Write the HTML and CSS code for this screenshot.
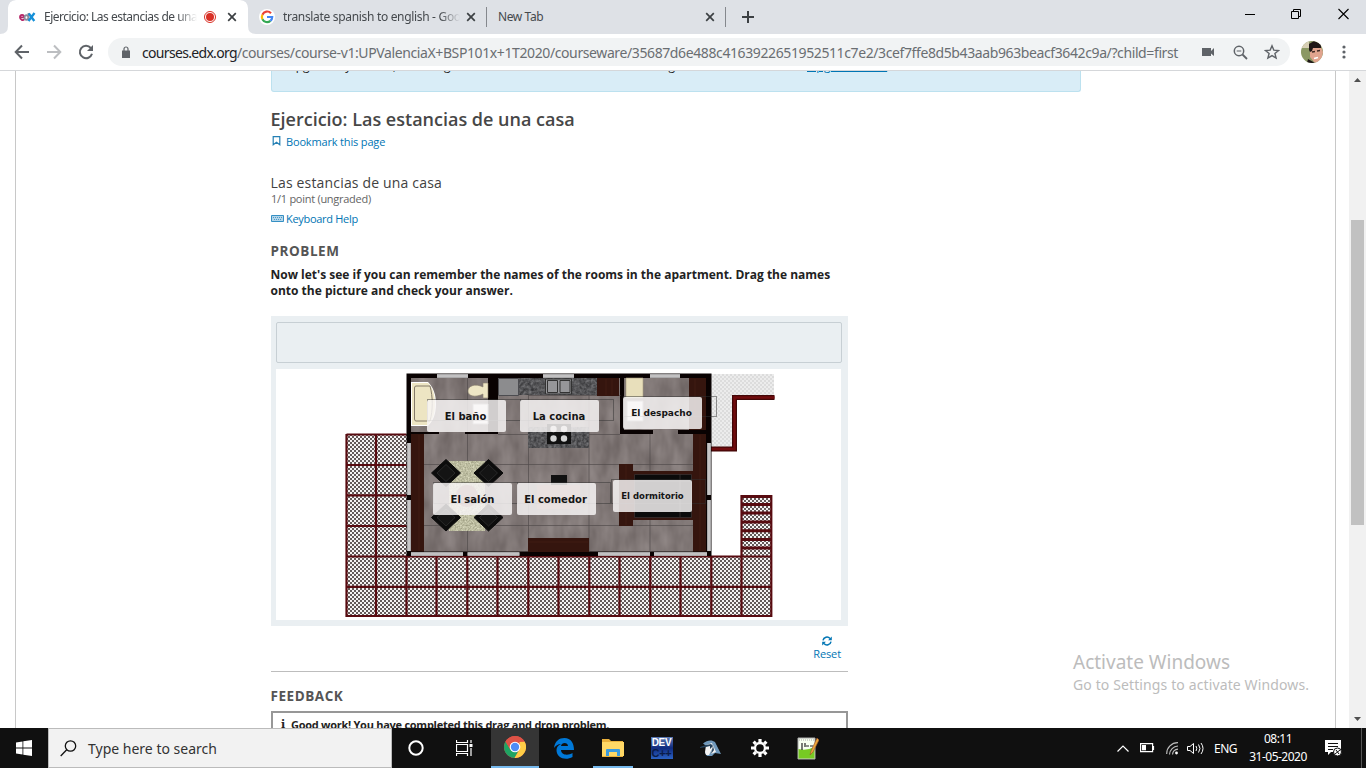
FILE: index.html
```html
<!DOCTYPE html>
<html lang="en">
<head>
<meta charset="utf-8">
<title>Ejercicio: Las estancias de una casa</title>
<link rel="stylesheet" href="styles.css">
</head>
<body>
<header class="tabs">
  <div class="tab active">
    <svg class="edx" width="17" height="12" viewBox="0 0 17 12"><g fill="none" stroke-width="1.8"><path stroke="#b62567" d="M1 6.3h4.2C5 3 1 3 1 6.3c0 3 3 3.300 4.300 2"/><path stroke="#8a8c9c" d="M9.500 2v7.500M9.300 6.500c0-3-3.800-3-3.800 0s3.800 3 3.800 0"/><path stroke="#1590d8" stroke-width="2.300" d="M9.800 2.500l5.500 7.500M15.500 2l-6 8"/></g></svg>
    <span class="tab-title fade t1">Ejercicio: Las estancias de una</span>
    <svg class="rec" width="14" height="14"><circle cx="7" cy="7" r="5.500" fill="none" stroke="#d93025"/><circle cx="7" cy="7" r="4" fill="#d93025"/></svg>
    <svg class="x" width="10" height="10"><path d="M1.200 1.200l7.600 7.600M8.800 1.200l-7.600 7.600"/></svg>
  </div>
  <div class="tab second">
    <svg class="google" width="16" height="16" viewBox="0 0 16 16"><circle cx="8" cy="8" r="8" fill="#fff"/><g fill="none" stroke-width="2.200"><path stroke="#ea4335" d="M12 4.200A5.200 5.200 0 0 0 3.400 5.700"/><path stroke="#fbbc05" d="M3.400 5.700a5.200 5.200 0 0 0 0 4.600"/><path stroke="#34a853" d="M3.400 10.300a5.200 5.200 0 0 0 8 1.600"/><path stroke="#4285f4" d="M11.400 11.900A5.200 5.200 0 0 0 13.200 8H8"/></g></svg>
    <span class="tab-title fade t2">translate spanish to english - Goo</span>
    <svg class="x" width="10" height="10"><path d="M1.200 1.200l7.600 7.600M8.800 1.200l-7.600 7.600"/></svg>
  </div>
  <div class="tab third">
    <span class="tab-title t3">New Tab</span>
    <svg class="x" width="10" height="10"><path d="M1.200 1.200l7.600 7.600M8.800 1.200l-7.600 7.600"/></svg>
  </div>
  <svg class="plus" width="12" height="12"><path d="M6 0v12M0 6h12" stroke="#3c4043" stroke-width="2"/></svg>
  <div class="window-controls">
    <svg width="10" height="12"><path d="M0 6.500h10" stroke="#000"/></svg>
    <svg width="11" height="12"><path d="M.5 3.500h7v7h-7zM2.500 3V1.500h7v7H8" fill="none" stroke="#000"/></svg>
    <svg width="11" height="12"><path d="M.5 1l10 10M10.500 1l-10 10" stroke="#000" stroke-width="1.100"/></svg>
  </div>
</header>
<div class="toolbar">
  <svg width="16" height="16" class="nav"><path d="M15 8H2M8 1.500L1.700 8 8 14.500" fill="none" stroke="#5f6368" stroke-width="2"/></svg>
  <svg width="16" height="16" class="nav"><path d="M1 8h13M8 1.500L14.300 8 8 14.500" fill="none" stroke="#bcbec1" stroke-width="2"/></svg>
  <svg width="16" height="16" class="nav"><path d="M12.800 4A6.200 6.200 0 1 0 14 9.800" fill="none" stroke="#5f6368" stroke-width="2"/><path d="M15 1v6H9z" fill="#5f6368"/></svg>
  <div class="omnibox">
    <svg width="8" height="12"><path d="M0 4.500h8V12H0z" fill="#5f6368"/><path d="M2 5V3a2 2 0 0 1 4 0v2" fill="none" stroke="#5f6368" stroke-width="1.200"/></svg>
    <span class="url"><b>courses.edx.org</b>/courses/course-v1:UPValenciaX+BSP101x+1T2020/courseware/35687d6e488c4163922651952511c7e2/3cef7ffe8d5b43aab963beacf3642c9a/?child=first</span>
    <svg class="cam" width="12" height="8"><path d="M0 0h9v3l3-3v8L9 5.500V8H0z" fill="#5f6368"/></svg>
    <svg class="lens" width="15" height="15" fill="none" stroke="#5f6368"><circle cx="6" cy="6" r="4.700" stroke-width="1.500"/><path d="M9.500 9.500l4.500 4.500" stroke-width="1.800"/><path d="M3.700 6h4.600"/></svg>
    <svg class="star" width="16" height="16"><path d="M8 1.800l1.800 4.300 4.700.4-3.600 3 1.200 4.600L8 11.600l-4.100 2.500 1.200-4.600-3.600-3 4.700-.4z" fill="none" stroke="#5f6368" stroke-width="1.400"/></svg>
  </div>
  <svg class="avatar" width="22" height="22"><defs><clipPath id="face"><circle cx="11" cy="11" r="11"/></clipPath></defs><g clip-path="url(#face)"><path fill="#8b9864" d="M0 0h22v22H0z"/><path fill="#d7cfb5" d="M0 0h8v7H0zM19 0h3v6h-3z"/><path fill="#e0a48e" d="M9 6l11 0 2 5-2 10-6 1-5-6z"/><path fill="#1e1717" d="M8 9V3l5-3 7 3v4l-8 0-1 3-2 1zM7 18l7 4H6z"/><path d="M11 11l3-.5M16 10l3-.5" stroke="#402923" stroke-width="1.300"/><path d="M13 17.500l4-1" stroke="#fff" stroke-width="1.300"/></g></svg>
  <svg class="dots" width="4" height="14" fill="#5f6368"><circle cx="2" cy="2" r="1.600"/><circle cx="2" cy="7" r="1.600"/><circle cx="2" cy="12" r="1.600"/></svg>
</div>
<div class="viewport">
  <div class="page">
    <main class="content">
      <div class="alert"><p><span class="alert-copy">Upgrade by Nov 26, 2020 to get unlimited access to the course as long as it exists.</span><a>Upgrade now</a></p></div>
      <h1>Ejercicio: Las estancias de una casa</h1>
      <a class="bookmark"><svg width="9" height="10"><path d="M1.200.700h6.600v8L4.500 6.200 1.200 8.700z" fill="none" stroke="#2580b4" stroke-width="1.200"/></svg><span>Bookmark this page</span></a>
      <section class="problem">
        <h2>Las estancias de una casa</h2>
        <p class="points">1/1 point (ungraded)</p>
        <a class="keyboard"><svg width="13" height="7"><path d="M.5.500h12v6H.5z" fill="#b5d5e9" stroke="#3590c4"/><path d="M2 2.500h9M3 4.500h7" stroke="#4a9bc9" stroke-dasharray="1 1"/></svg><span>Keyboard Help</span></a>
        <h3>PROBLEM</h3>
        <p class="prompt"><span>Now let's see if you can remember the names of the rooms in the apartment. Drag the names</span><br><span>onto the picture and check your answer.</span></p>
        <div class="dnd">
          <div class="bank"></div>
          <div class="plan">
            <svg width="565" height="251" viewBox="276 369 565 251">
              <defs>
                <pattern id="mesh" width="4" height="4" patternUnits="userSpaceOnUse"><path fill="#f5f3f3" d="M0 0h4v4H0z"/><path fill="#635a59" d="M0 0h2v2H0zM2 2h2v2H2z"/></pattern>
                <pattern id="pale" width="4" height="4" patternUnits="userSpaceOnUse"><path fill="#ececec" d="M0 0h4v4H0z"/><path fill="#dcdcdc" d="M0 0h2v2H0zM2 2h2v2H2z"/></pattern>
                <filter id="stone" x="0" y="0" width="1" height="1" color-interpolation-filters="sRGB"><feTurbulence type="fractalNoise" baseFrequency=".07 .03" numOctaves="3" seed="4"/><feColorMatrix values=".2 0 0 0 .4 .2 0 0 0 .365 .2 0 0 0 .36 0 0 0 0 1"/><feComposite in2="SourceGraphic" operator="in"/></filter>
                <filter id="granite" x="0" y="0" width="1" height="1" color-interpolation-filters="sRGB"><feTurbulence type="fractalNoise" baseFrequency=".35" numOctaves="2"/><feColorMatrix values=".4 0 0 0 .13 .4 0 0 0 .13 .4 0 0 0 .14 0 0 0 0 1"/><feComposite in2="SourceGraphic" operator="in"/></filter>
                <filter id="rug" x="0" y="0" width="1" height="1" color-interpolation-filters="sRGB"><feTurbulence type="fractalNoise" baseFrequency=".6" numOctaves="2"/><feColorMatrix values=".4 0 0 0 .54 .4 0 0 0 .54 .4 0 0 0 .43 0 0 0 0 1"/></filter>
                <g id="chair"><path d="M0-13.500L14.500 0 0 13.500-14.500 0z" fill="#0c0c0c" stroke="#0c0c0c" stroke-linejoin="round"/><path d="M-9 0L0-8.500 9 0 0 8.500z" fill="#141414" stroke="#343434" stroke-width=".7"/></g>
              </defs>
              <path fill="url(#mesh)" d="M346 434h61v122h365v61H346zM741 495h31v61h-31z"/>
              <path fill="none" stroke="#580b10" stroke-width="2.200" d="M346.500 434.500h60M346.500 465h60M346.500 495.300h60M346.500 526h60M346.500 556.500h425M346.500 586.800h425M346.500 616h425M346.500 434v183M376 434v183M406.500 556v61M436.500 556v61M467.300 556v61M497.500 556v61M528.300 556v61M558.500 556v61M589.300 556v61M619.500 556v61M650.300 556v61M680.500 556v61M711.300 556v61M741.500 495v122M771.300 495v122"/>
              <path stroke="#580b10" stroke-width="3" d="M741 496.500h31M741 504.500h31M741 513h31M741 522h31M741 530.700h31M741 539.500h31M741 548h31"/>
              <path fill="url(#pale)" d="M711 374h63v22h-41v52h-22z"/>
              <path d="M774.500 397.500h-40v51.500H711" fill="none" stroke="#420707" stroke-width="5"/><path d="M774.500 397.500h-40v51.500H711" fill="none" stroke="#700b0d" stroke-width="2.500"/>
              <path fill="#090202" d="M406.500 373.500h305V556h-305z"/>
              <path filter="url(#stone)" d="M411 378h77v54h-77zM498 378h122v56h-122zM624 378h82v52h-82zM424 434h269v117.500H424zM439 430h26v5h-26zM653 429h25v6h-25z"/>
              <path fill="none" stroke="#514c4c" stroke-width=".7" d="M467.500 378v54M467.500 434v117M528.500 395v143M589 395v157M650 434v118M424 464.500h269M498 434.500h122M424 525.500h269M528.500 395.500h92"/>
              <path fill="#35150e" d="M411 434h13v117.500h-13zM693 434h13v117.500h-13zM597 378h22v18h-22zM689 378h17v52h-17zM619 464h14v62h-14zM528 538h61v14h-61z"/>
              <path fill="none" stroke="#4f2519" stroke-width=".5" d="M419 435v116M700 435v116M606 379v16M612 379v16M695 379v50M626 465v60M529 542h59"/>
              <path fill="#aaa9aa" d="M437 374h31v4h-31zM543 374h31v4h-31zM650 374h30v4h-30zM407 443h4v52h-4zM407 500h4v51h-4zM707 443h4v52h-4zM707 500h4v51h-4zM411 552h52v4h-52zM467.500 552h52v4h-52zM598 552h52v4h-52zM654 552h53v4h-53z"/>
              <path stroke="#dadada" stroke-width="1.200" d="M437 376h31M543 376h31M650 376h30M409 443v52M409 500v51M709 443v52M709 500v51M411 554h52M467.500 554h52M598 554h52M654 554h53"/>
              <path fill="#fff" d="M411 382h17c5 5 8 12 8 22s-3 17-8 22h-17z"/><path fill="#ede5c3" d="M412 383h16c5 5 7 12 7 21s-2 16-7 21h-16z"/><path fill="#ede5c3" stroke="#847a68" d="M416 386h14c3 11 3 24 0 35h-14q-1.500 0-1.500-2v-31q0-2 1.500-2z"/>
              <path fill="#eee6c5" stroke="#8b826e" stroke-width=".6" d="M488 383h-5v4c-8-4-15-1-15 4s7 7 15 3v4h5z"/>
              <path filter="url(#granite)" d="M519 378h78v17h-78zM528 427h61v21h-61z"/>
              <path fill="#8c8c8e" stroke="#4c4c50" d="M498.500 378.500h20v17h-20z"/><path fill="#969699" stroke="#333" d="M545.500 379h26v15h-26zM547.500 380.500h10v12h-10zM560 380.500h10v12h-10z"/>
              <path fill="#111" d="M547 424h24v20h-24zM551 475h16v10h-16z"/><g fill="#d4d4d4"><circle cx="553.500" cy="429" r="3.200"/><circle cx="564" cy="429" r="3.200"/><circle cx="553.500" cy="438.500" r="3.200"/><circle cx="564" cy="438.500" r="3.200"/></g>
              <path fill="#e8dfbb" stroke="#a79e7f" stroke-width=".6" d="M626 378h17v20h-17z"/><path fill="#fff" stroke="#aaa" d="M627 401h16v20h-16zM473 404h15v20h-15z"/><path fill="#35150e" d="M632 471h61v49h-61z"/><path fill="#0b0b0b" stroke="#3c3434" stroke-width=".7" d="M634.500 474.500h57v43h-57zM634.500 481h57M680 474v43"/>
              <path filter="url(#rug)" d="M449 461h36v70h-36z"/><circle cx="467" cy="496" r="11" fill="#9c7770"/><path fill="#9c7770" d="M537 485h43v24h-43z"/>
              <use href="#chair" x="446" y="473"/><use href="#chair" x="488.500" y="473"/><use href="#chair" x="446" y="517.500"/><use href="#chair" x="488.500" y="517.500"/>
              <path fill="none" stroke="#333" stroke-dasharray="1 1" d="M427.500 420.500v-21h93v21zM520.500 399.500h93v21h-93zM623.500 396.500h93v20h-93zM433.500 482.500h84v21h-84zM517.500 482.500h93v21h-93zM611.500 479.500h94v24h-94z"/>
            </svg>
            <div class="label bano">El baño</div><div class="label cocina">La cocina</div><div class="label despacho">El despacho</div>
            <div class="label salon">El salón</div><div class="label comedor">El comedor</div><div class="label dormitorio">El dormitorio</div>
          </div>
        </div>
        <div class="actions"><a class="reset"><svg width="10" height="10" fill="none" stroke="#0075b4" stroke-width="1.500"><path d="M1 4.300A4 4 0 0 1 8 2.500M9 5.700A4 4 0 0 1 2 7.500"/><path d="M9.800.5v3.700H6.100zM.2 9.500V5.800h3.700z" fill="#0075b4" stroke="none"/></svg><span>Reset</span></a></div>
        <h3 class="fb-title">FEEDBACK</h3>
        <div class="feedback"><span class="info">i</span><span class="good">Good work! You have completed this drag and drop problem.</span></div>
      </section>
    </main>
    <aside class="watermark"><p class="w1">Activate Windows</p><p class="w2">Go to Settings to activate Windows.</p></aside>
  </div>
  <div class="scrollbar"><svg width="7" height="4"><path d="M3.500 0L7 4H0z" fill="#505050"/></svg><div class="thumb"></div><svg width="7" height="4"><path d="M0 0h7L3.500 4z" fill="#505050"/></svg></div>
</div>
<footer class="taskbar">
  <div class="start"><svg width="16" height="16" fill="#fff"><path d="M0 2.500l6.500-1v6H0zM7.300 1.300L16 0v7.500H7.300zM0 8.400h6.500v6L0 13.500zM7.300 8.400H16V16l-8.700-1.300z"/></svg></div>
  <div class="search"><svg width="17" height="17" fill="none" stroke="#111" stroke-width="1.300"><circle cx="10.500" cy="6" r="5.200"/><path d="M6.700 9.700L.7 16"/></svg><span>Type here to search</span></div>
  <div class="app cortana"><svg width="16" height="16"><circle cx="8" cy="8" r="6.700" fill="none" stroke="#fff" stroke-width="2"/></svg></div>
  <div class="app"><svg width="17" height="16" fill="none" stroke="#fff"><path d="M.5 0v2.500h11V0M.5 16v-2.500h11V16M.5 4.500h11v7H.5zM15 0v3M15 8v8" stroke-width="1.200"/><path d="M13.500 4h3v3h-3z" fill="#fff" stroke="none"/></svg></div>
  <div class="app chrome"><svg width="22" height="22" viewBox="0 0 22 22"><circle cx="11" cy="11" r="11" fill="#de5246"/><path d="M1.500 5.500A11 11 0 0 0 10.500 22l4.700-8.500L11 11 6 13z" fill="#1fa463"/><path d="M20.500 5.500A11 11 0 0 1 10.500 22l5-8.500V6z" fill="#ffcd46"/><path d="M11 5.500h9.500A11 11 0 0 0 1.500 5.500L6 13z" fill="#de5246"/><circle cx="11" cy="11" r="5.300" fill="#fff"/><circle cx="11" cy="11" r="4.200" fill="#4c8bf5"/></svg></div>
  <div class="app"><svg width="20" height="21" viewBox="0 0 20 21"><path d="M0 10C1 3 5 0 10.500 0 17 0 20 5 20 12H7c0 5 7 6 11.500 3v4c-7 4-16 1-16-7 0-3 2-5 4.500-6C4 6 1.500 8 0 10zm7-2h7c0-4-6.500-4-7 0z" fill="#0078d7"/></svg></div>
  <div class="app explorer"><svg width="22" height="19"><path d="M0 1h7l2 2h12v16H0z" fill="#eab13c"/><path d="M0 4h22v14H0z" fill="#ffd866"/><path d="M4 18v-6q0-1 1-1h12q1 0 1 1v6h-3v-4H7v4z" fill="#3b9bdf"/></svg></div>
  <div class="app"><div class="dev"><span>DEV</span><span class="cpp">C++</span></div></div>
  <div class="app"><svg width="21" height="17" viewBox="0 0 21 17"><path d="M3 3.500C7 0 12-.5 15 2l6 12-6-1-3 3H7l-2-3 3-6-3-2z" fill="#6f98bb"/><path d="M6 5l6-2 1 4-4 8-3 0-1-3zM13 5l3 7-5 2z" fill="#f3f3f3"/><path d="M0 7l6-2 5-1 2 2-3 3 0-3-4 1-6 1zM13 6l1 4-3 4z" fill="#24415b"/></svg></div>
  <div class="app"><svg width="18" height="18" viewBox="0 0 18 18"><g stroke="#fff" fill="none"><circle cx="9" cy="9" r="5" stroke-width="2.300"/><path stroke-width="3.200" d="M9 0v3M9 15v3M0 9h3M15 9h3M2.600 2.600l2.200 2.200M13.200 13.200l2.200 2.200M2.600 15.400l2.200-2.200M13.200 4.800l2.200-2.200"/></g></svg></div>
  <div class="app notepad"><svg width="22" height="24" viewBox="0 0 22 24"><path d="M1 2h17v21H1z" fill="#f7fff0" stroke="#aaa"/><path d="M1.500 13q8 2 16-2v11.500h-16z" fill="#77ca23"/><path d="M2 4h15" stroke="#aaa" stroke-dasharray="1 1"/><path d="M5 7v7M8 7v4M9 10h3M13 10h3" stroke="#222" stroke-width="1.200"/><path d="M20 2l-6 13-1 4 3-3 6-12z" fill="#eda63a" stroke="#94512e" stroke-width=".6"/></svg></div>
  <div class="tray">
    <svg width="12" height="7" fill="none" stroke="#fff" stroke-width="1.200"><path d="M.5 6.500L6 1l5.500 5.500"/></svg>
    <svg width="15" height="10"><path d="M.6.600h12v8H.6zM13.500 3v4" fill="none" stroke="#fff" stroke-width="1.200"/><path d="M2 2h4v5.300H2z" fill="#fff"/></svg>
    <svg width="13" height="13" fill="none" stroke="#bbb" stroke-width="1.200"><path d="M.7 12A11 11 0 0 1 12 .7M3.500 12.500A9 9 0 0 1 12 4M6.500 12.500A6 6 0 0 1 12 7.200"/><circle cx="10.500" cy="11" r="1.400" fill="#fff" stroke="none"/></svg>
    <svg class="sound" width="17" height="13" fill="none" stroke="#fff"><path d="M.5 4.500H3l3.500-3v10L3 8.500H.5zM9 4q1.500 2.500 0 5M11.500 2.500q3 4 0 8M14 1q4 5.500 0 11"/></svg>
    <span class="lang">ENG</span>
    <div class="clock"><span>08:11</span><span class="date">31-05-2020</span></div>
    <svg class="notes" width="17" height="17"><path d="M0 0h16v12H6l-3 3v-3H0z" fill="#fff"/><path d="M3 3.500h10M3 6.500h10M3 9.500h5" stroke="#111"/><circle cx="12.500" cy="12" r="4" fill="#fff" stroke="#111"/><path d="M10 14l5-4M11 10l3 4" stroke="#111"/></svg>
  </div>
  <div class="desktop-edge"></div>
</footer>
</body>
</html>
```
FILE: styles.css
```css
* { box-sizing: border-box; }
body { margin: 0; width: 1366px; height: 768px; overflow: hidden; display: flex; flex-direction: column; background: #fff; font-family: "Open Sans", sans-serif; color: #222; }
svg { display: block; flex: none; }
p, h1, h2, h3 { margin: 0; white-space: nowrap; }

.tabs { height: 34px; flex: none; display: flex; align-items: center; background: #dee1e6; }
.tab { height: 34px; display: flex; align-items: center; font: 12px "Noto Sans", sans-serif; color: #45494d; }
.active { width: 240px; margin-left: 8px; padding-left: 11px; background: #fff; border-radius: 8px 8px 0 0; box-shadow: 8px 8px 0 #fff, -8px 8px 0 #fff; clip-path: path("M-8 34Q0 34 0 26V8Q0 0 8 0H232Q240 0 240 8V26Q240 34 248 34Z"); }
.second { width: 239px; padding-left: 11px; border-right: 1px solid #85888d; height: 20px; }
.third { width: 239px; padding-left: 11px; border-right: 1px solid #85888d; height: 20px; }
.tab-title { overflow: hidden; white-space: nowrap; line-height: 20px; }
.t1 { width: 153px; margin-left: 8px; letter-spacing: -.5px; }
.t2 { width: 177px; margin-left: 8px; letter-spacing: -.32px; }
.t3 { width: 207px; letter-spacing: -.4px; }
.fade { -webkit-mask-image: linear-gradient(90deg, #000 calc(100% - 20px), transparent); mask-image: linear-gradient(90deg, #000 calc(100% - 20px), transparent); }
.rec { margin-left: 6px; }
.x { stroke: #3c4043; stroke-width: 1.7; }
.rec + .x { margin-left: 10px; }
.second .x { margin-left: 6px; }
.plus { margin-left: 16px; }
.window-controls { display: flex; gap: 36px; margin: 0 17px 6px auto; }

.toolbar { height: 37px; flex: none; display: flex; align-items: center; padding: 0 19px 0 14px; border-bottom: 1px solid #d5d7da; }
.nav + .nav { margin-left: 16px; }
.omnibox { flex: none; width: 1182px; height: 28px; margin-left: 14px; padding-left: 14px; background: #f1f3f4; border-radius: 14px; display: flex; align-items: center; }
.url { width: 1037px; margin-left: 12px; font: 14px "Noto Sans", sans-serif; letter-spacing: -.393px; color: #6a6e72; white-space: nowrap; }
.url b { font-weight: 400; letter-spacing: -.68px; color: #202124; }
.cam { margin-left: 23px; }
.lens { margin-left: 19px; }
.star { margin-left: 16px; }
.avatar { margin-left: 11px; }
.dots { margin-left: 19px; }

.viewport { height: 657px; flex: none; display: flex; overflow: hidden; }
.page { width: 1321px; margin-left: 15px; border: solid #c8c8c8; border-width: 0 1px; display: flex; }
.content { width: 810px; margin-left: 255px; flex: none; }
.alert { height: 21px; background: #d9edf7; border: solid #bce1ef; border-width: 0 1px 1px; border-radius: 0 0 3px 3px; overflow: hidden; }
.alert p { margin: -14px 0 0 15px; font-size: 12px; line-height: 18px; display: flex; }
.alert-copy { width: 520px; letter-spacing: -.05px; }
.alert a { color: #0075b4; text-decoration: underline; letter-spacing: .45px; }
h1 { margin: 15px 0 0 -.5px; font-size: 18px; line-height: 24px; font-weight: 600; color: #474747; }
.bookmark { display: flex; align-items: center; height: 16px; margin-top: 2px; padding-left: 1px; gap: 5px; color: #0075b4; font-size: 11px; font-weight: 500; letter-spacing: -.16px; }
.problem { width: 577px; padding-top: 24px; }
h2 { margin-left: -.5px; font-size: 14px; line-height: 20px; font-weight: 400; letter-spacing: .17px; color: #414141; }
.points { margin-top: -1px; font-size: 11px; line-height: 13px; letter-spacing: -.27px; color: #646464; }
.keyboard { display: flex; align-items: center; gap: 2px; height: 16px; margin-top: 5px; color: #0075b4; font-size: 11px; letter-spacing: -.3px; }
h3 { margin: 15px 0 0 -.5px; font-size: 13.5px; line-height: 20px; font-weight: 700; letter-spacing: .55px; color: #555; }
.prompt { margin: 6px 0 0 -.5px; font-size: 12px; line-height: 16px; font-weight: 700; color: #222; }
.dnd { margin-top: 17px; height: 310px; padding: 6px 5px 0; background: #eaeff2; }
.bank { width: 566px; height: 41px; border: 1px solid #c7cfd4; border-radius: 2px; }
.plan { width: 565px; height: 251px; margin-top: 6px; background: #fff; position: relative; }
.label { position: absolute; width: 79px; height: 32px; border-radius: 2px; background: rgba(248, 246, 246, .84); color: #151515; display: grid; place-items: center; font: bold 10px "DejaVu Sans", sans-serif; white-space: nowrap; }
.bano { left: 151px; top: 31px; padding-right: 2px; }
.cocina { left: 244px; top: 31px; padding-right: 1px; }
.despacho { left: 347px; top: 28px; font-size: 9px; padding-right: 2px; }
.salon { left: 157px; top: 114px; }
.comedor { left: 241px; top: 114px; padding-right: 2px; }
.dormitorio { left: 337px; top: 111px; font-size: 8.5px; }
.actions { height: 46px; display: flex; justify-content: flex-end; padding: 10px 7px 0 0; border-bottom: 1px solid #bdbdbd; }
.reset { display: flex; flex-direction: column; align-items: center; color: #0075b4; font-size: 11px; line-height: 15px; letter-spacing: -.1px; }
.fb-title { margin-top: 14px; }
.feedback { margin-top: 5px; height: 60px; padding: 4px 8px; border: 2px solid #979797; display: flex; gap: 6px; font-size: 11px; line-height: 15px; font-weight: 700; letter-spacing: -.26px; white-space: nowrap; }
.info { font-family: "DejaVu Serif", serif; }
.watermark { margin: 579px 0 0 -8px; color: #bcbcbc; font-family: "Noto Sans", sans-serif; }
.w1 { font-size: 19px; line-height: 24px; }
.w2 { margin-top: 1px; font-size: 14px; line-height: 20px; letter-spacing: .12px; }
.scrollbar { width: 17px; margin-left: 13px; background: #f1f1f1; display: flex; flex-direction: column; align-items: center; padding: 7px 0; }
.thumb { width: 13px; height: 305px; margin: 138px 0 auto; background: #c1c1c1; }

.taskbar { height: 40px; flex: none; display: flex; align-items: center; background: #101010; color: #fff; font-family: "Noto Sans", sans-serif; }
.start { width: 48px; display: grid; place-items: center; }
.search { width: 344px; height: 40px; padding-left: 11px; display: flex; align-items: center; gap: 11px; background: #f2f2f2; border: 1px solid #bbb; color: #333; font-size: 14px; white-space: nowrap; }
.app { width: 49px; height: 40px; display: grid; place-items: center; }
.cortana { width: 48px; }
.app.chrome { background: #353535; border-bottom: 2px solid #76b9ed; width: 48px; margin-left: 2px; }
.app.explorer { width: 40px; margin: 0 4px 0 5px; border-bottom: 2px solid #76b9ed; }
.notepad { width: 47px; }
.dev { width: 22px; height: 22px; background: linear-gradient(#5c7ab4, #102b7e 50%, #2b62c4); display: flex; flex-direction: column; align-items: center; font: bold 10px/11px "Liberation Sans", sans-serif; letter-spacing: -.3px; }
.cpp { color: #0b1c48; font-size: 11px; }
.tray { margin: 0 19px 0 auto; display: flex; align-items: center; gap: 11px; font-size: 12px; }
.sound { margin-left: -3px; }
.lang { width: 23px; margin-left: -1px; letter-spacing: -.5px; }
.clock { width: 62px; display: flex; flex-direction: column; align-items: center; line-height: 18px; letter-spacing: -.5px; margin-left: -1px; }
.notes { margin-left: 5px; }
.desktop-edge { width: 5px; height: 40px; border-left: 1px solid #555; }
```
